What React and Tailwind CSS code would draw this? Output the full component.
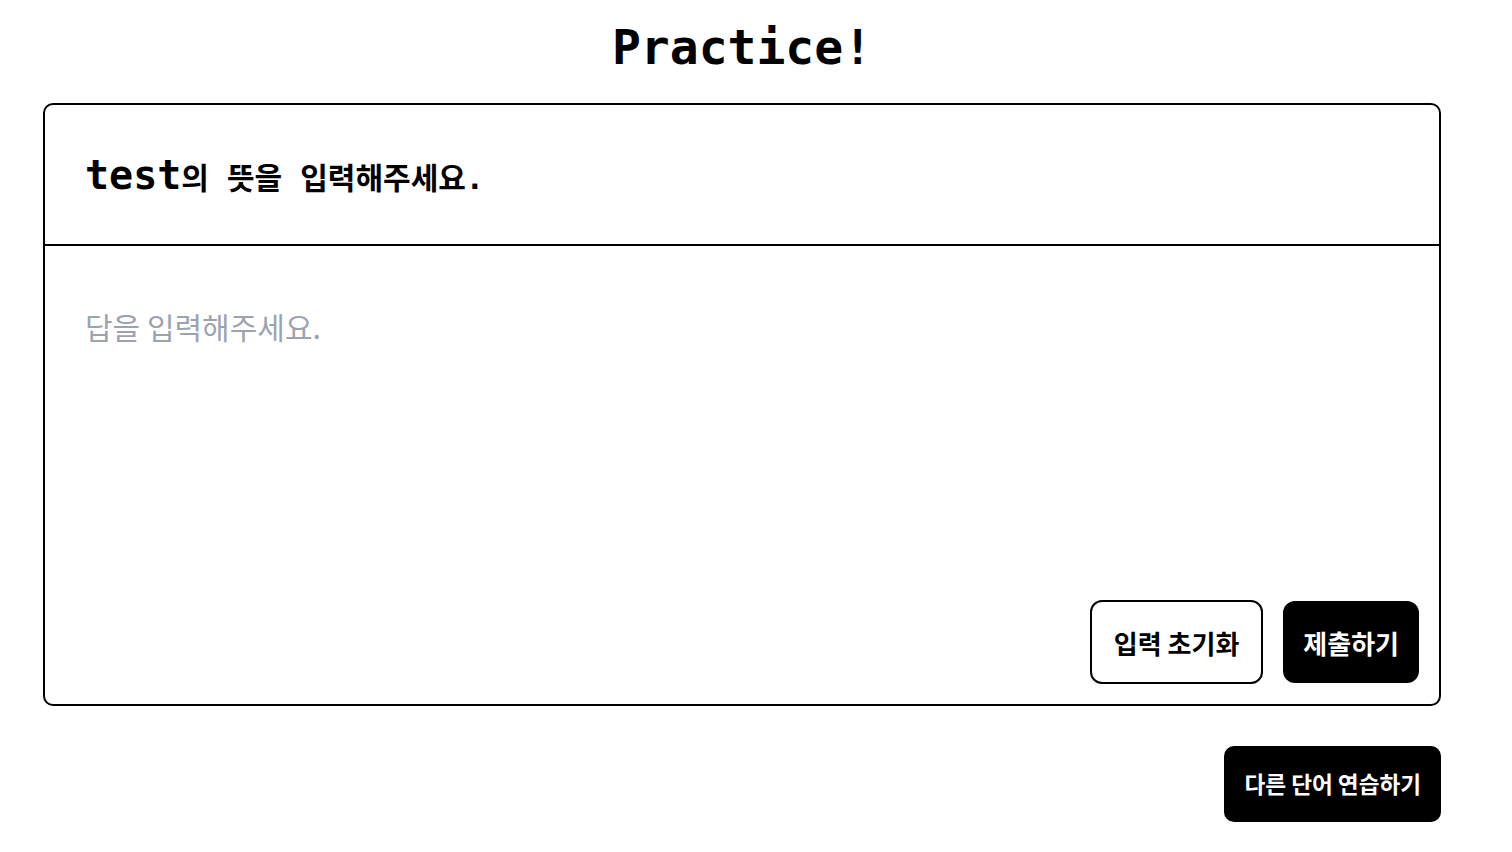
import { useState } from "react";

const mono = "font-['DejaVu_Sans_Mono','Noto_Sans_CJK_KR',monospace]";
const sans = "font-['Noto_Sans_CJK_KR','Noto_Sans',sans-serif]";

export default function App() {
  const [answer, setAnswer] = useState("");

  return (
    <div className="min-h-screen bg-white">
      <div className="ml-[43px] w-[1398px] pt-[23px] pb-8 flex flex-col">
        {/* title */}
        <h1 className={`${mono} text-5xl font-bold text-center leading-[48px] text-black`}>
          Practice!
        </h1>

        {/* question card */}
        <div className="mt-[32px] border-2 border-black rounded-[10px] flex flex-col">
          <div className={`${mono} px-10 h-[141px] flex items-center border-b-2 border-black`}>
            <p className="text-[40px] font-bold text-black">
              test<span className="text-[30px]">의 뜻을 입력해주세요.</span>
            </p>
          </div>

          <div className="h-[458px] flex flex-col">
            <textarea
              value={answer}
              onChange={(e) => setAnswer(e.target.value)}
              placeholder="답을 입력해주세요."
              className={`${sans} flex-1 resize-none outline-none px-10 pt-[58px] text-[30px] text-black placeholder:text-[#9ca3af]`}
            />
            <div className="flex justify-end items-center gap-5 px-5 pb-5">
              <button
                onClick={() => setAnswer("")}
                className={`${sans} border-2 border-black rounded-xl px-[22px] h-[84px] text-[26px] font-bold text-black bg-white`}
              >
                입력 초기화
              </button>
              <button className={`${sans} rounded-xl px-5 h-[82px] text-[26px] font-bold text-white bg-black`}>
                제출하기
              </button>
            </div>
          </div>
        </div>

        {/* next word */}
        <div className="mt-10 flex justify-end">
          <button className={`${sans} rounded-[10px] px-5 h-[76px] text-[22.6px] font-bold text-white bg-black`}>
            다른 단어 연습하기
          </button>
        </div>
      </div>
    </div>
  );
}
